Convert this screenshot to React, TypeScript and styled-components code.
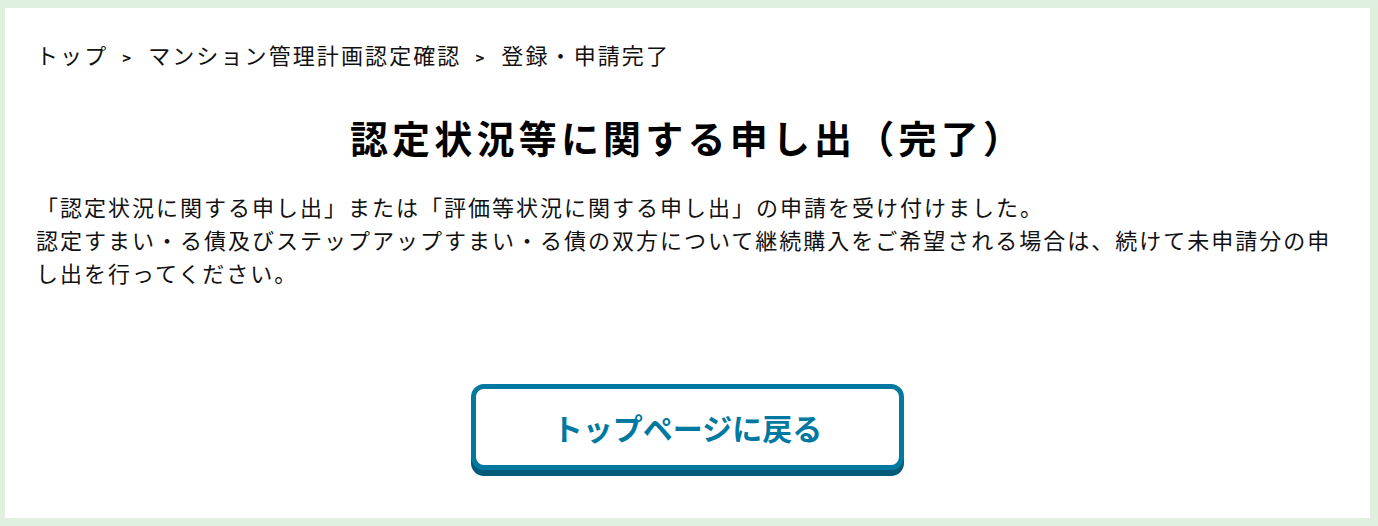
import React from "react";
import styled, { createGlobalStyle } from "styled-components";

const GlobalStyle = createGlobalStyle`
  html, body {
    margin: 0;
    padding: 0;
    background-color: rgb(223, 240, 223);
  }
`;

const crumbs = ["トップ", "マンション管理計画認定確認", "登録・申請完了"];

function App() {
  return (
    <>
      <GlobalStyle />
      <Page>
        <Card>
          <Breadcrumb>
            {crumbs.map((label, i) => (
              <React.Fragment key={label}>
                {i > 0 && <Separator>&gt;</Separator>}
                <Crumb>{label}</Crumb>
              </React.Fragment>
            ))}
          </Breadcrumb>
          <Title>認定状況等に関する申し出（完了）</Title>
          <Message>
            「認定状況に関する申し出」または「評価等状況に関する申し出」の申請を受け付けました。
            <br />
            認定すまい・る債及びステップアップすまい・る債の双方について継続購入をご希望される場合は、続けて未申請分の申し出を行ってください。
          </Message>
          <ButtonRow>
            <BackButton href="#">トップページに戻る</BackButton>
          </ButtonRow>
        </Card>
      </Page>
    </>
  );
}
export default App;

const Page = styled.div`
  box-sizing: border-box;
  height: 526px;
  padding: 8px 8px 8px 5px;
  font-family: "Noto Sans CJK JP", "Noto Sans", sans-serif;
  color: rgb(17, 17, 17);
`;

const Card = styled.div`
  box-sizing: border-box;
  height: 100%;
  background-color: white;
  padding: 30px 31px 0 31px;
  display: flex;
  flex-direction: column;
`;

const Breadcrumb = styled.nav`
  display: flex;
  align-items: baseline;
  font-size: 22px;
  line-height: 33px;
  letter-spacing: 2.1px;
`;

const Crumb = styled.span``;

const Separator = styled.span`
  font-size: 15px;
  font-weight: 700;
  margin: 0 17px 0 14px;
  letter-spacing: 0;
`;

const Title = styled.h1`
  margin: 38px 0 0;
  text-align: center;
  font-size: 38px;
  line-height: 50px;
  font-weight: 700;
  letter-spacing: 4.2px;
  color: black;
`;

const Message = styled.p`
  margin: 28px 0 0;
  font-size: 22px;
  line-height: 33px;
  letter-spacing: 2px;
`;

const ButtonRow = styled.div`
  display: flex;
  justify-content: center;
  margin-top: 95px;
`;

const BackButton = styled.a`
  box-sizing: border-box;
  width: 433px;
  height: 86px;
  display: flex;
  align-items: center;
  justify-content: center;
  background-color: white;
  border: 5px solid rgb(0, 121, 161);
  border-radius: 13px;
  box-shadow: 0 6px 0 rgb(0, 90, 120);
  color: rgb(0, 121, 161);
  font-size: 30px;
  font-weight: 700;
  text-decoration: none;
`;
